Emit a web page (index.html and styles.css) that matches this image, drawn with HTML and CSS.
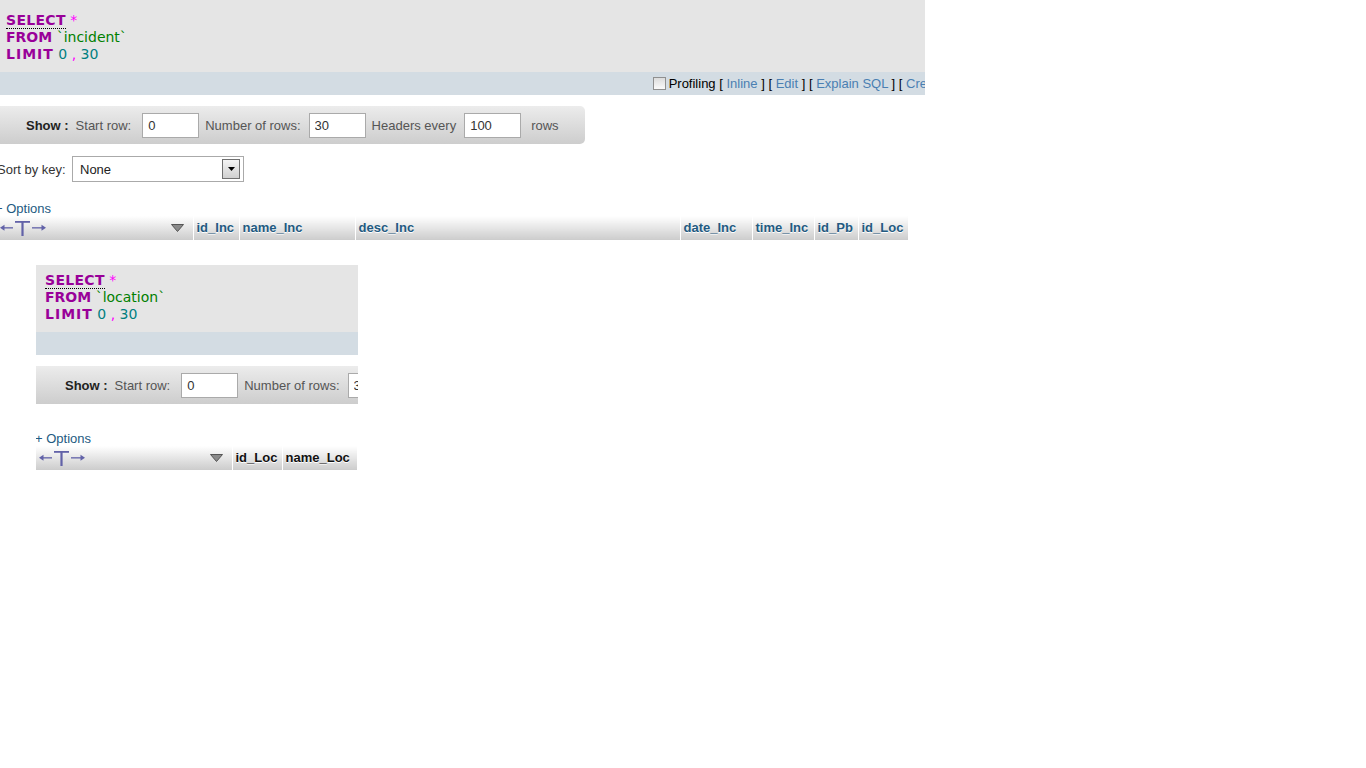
FILE: index.html
```html
<!DOCTYPE html>
<html>
<head>
<meta charset="utf-8">
<title>phpMyAdmin</title>
<link rel="stylesheet" href="styles.css">
</head>
<body>
<div class="result r1">
  <div class="sqlbox">
    <div class="line"><span class="kw doc">SELECT</span> <span class="punct">*</span></div>
    <div class="line"><span class="kw">FROM</span> <span class="ident">`incident`</span></div>
    <div class="line"><span class="kw lim">LIMIT</span> <span class="num">0</span> <span class="punct">,</span> <span class="num">30</span></div>
  </div>
  <div class="tools"><span class="check"></span> <span class="plain">Profiling</span> <span class="br">[</span> <a class="tl">Inline</a> <span class="br">]</span> <span class="br">[</span> <a class="tl">Edit</a> <span class="br">]</span> <span class="br">[</span> <a class="tl">Explain SQL</a> <span class="br">]</span> <span class="br">[</span> <a class="tl">Create PHP Code</a> <span class="br">]</span> <span class="br">[</span> <a class="tl">Refresh</a> <span class="br">]</span></div>
  <div class="showbar">
    <span class="show">Show :</span>
    <span class="lbl l-start">Start row:</span>
    <input class="field" type="text" value="0">
    <span class="lbl l-num">Number of rows:</span>
    <input class="field" type="text" value="30">
    <span class="lbl l-head">Headers every</span>
    <input class="field" type="text" value="100">
    <span class="lbl l-rows">rows</span>
  </div>
  <div class="sortrow">
    <span class="sortlbl">Sort by key:</span>
    <div class="select"><span>None</span><span class="selbtn"><svg width="7" height="4" viewBox="0 0 7 4"><polygon points="0,0 7,0 3.5,4" fill="#000"/></svg></span></div>
  </div>
  <div class="options o1"><a>+ Options</a></div>
  <table class="hdr t1">
    <colgroup><col style="width:196px"><col style="width:46px"><col style="width:116px"><col style="width:325px"><col style="width:72px"><col style="width:62px"><col style="width:44px"><col style="width:50px"></colgroup>
    <tr>
      <th class="first"><div class="firstin"><svg class="lr" width="48" height="18" viewBox="0 0 48 18"><g fill="#6262a8" stroke="none"><rect x="2" y="8.2" width="11" height="1.3"/><polygon points="0,8.8 4.5,5.8 4.5,11.8"/><rect x="15" y="2" width="15" height="1.8"/><rect x="21.4" y="2" width="2.2" height="15"/><rect x="32" y="8.2" width="11" height="1.3"/><polygon points="46,8.8 41.5,5.8 41.5,11.8"/></g></svg><svg class="tri" width="13" height="8" viewBox="0 0 13 8"><polygon points="0.5,0.5 12.5,0.5 6.5,7.5" fill="#8a8a8a" stroke="#555" stroke-width="1"/></svg></div></th>
      <th>id_Inc</th><th>name_Inc</th><th>desc_Inc</th><th>date_Inc</th><th>time_Inc</th><th>id_Pb</th><th>id_Loc</th>
    </tr>
  </table>
</div>

<div class="result r2">
  <div class="sqlbox">
    <div class="line"><span class="kw doc">SELECT</span> <span class="punct">*</span></div>
    <div class="line"><span class="kw">FROM</span> <span class="ident">`location`</span></div>
    <div class="line"><span class="kw lim">LIMIT</span> <span class="num">0</span> <span class="punct">,</span> <span class="num">30</span></div>
  </div>
  <div class="tools empty"></div>
  <div class="showbar">
    <span class="show">Show :</span>
    <span class="lbl l-start">Start row:</span>
    <input class="field" type="text" value="0">
    <span class="lbl l-num">Number of rows:</span>
    <input class="field" type="text" value="30">
    <span class="lbl l-head">Headers every</span>
    <input class="field" type="text" value="100">
    <span class="lbl l-rows">rows</span>
  </div>
  <div class="options o2"><a>+ Options</a></div>
  <table class="hdr t2">
    <colgroup><col style="width:196px"><col style="width:50px"><col style="width:75px"><col style="width:100px"></colgroup>
    <tr>
      <th class="first"><div class="firstin"><svg class="lr" width="48" height="18" viewBox="0 0 48 18"><g fill="#6262a8" stroke="none"><rect x="2" y="8.2" width="11" height="1.3"/><polygon points="0,8.8 4.5,5.8 4.5,11.8"/><rect x="15" y="2" width="15" height="1.8"/><rect x="21.4" y="2" width="2.2" height="15"/><rect x="32" y="8.2" width="11" height="1.3"/><polygon points="46,8.8 41.5,5.8 41.5,11.8"/></g></svg><svg class="tri" width="13" height="8" viewBox="0 0 13 8"><polygon points="0.5,0.5 12.5,0.5 6.5,7.5" fill="#8a8a8a" stroke="#555" stroke-width="1"/></svg></div></th>
      <th>id_Loc</th><th>name_Loc</th><th>comment</th>
    </tr>
  </table>
</div>
</body>
</html>
```

FILE: styles.css
```css
html, body {
  margin: 0;
  padding: 0;
  background: #ffffff;
}
body {
  font-family: "Liberation Sans", Arial, sans-serif;
  font-size: 13px;
  color: #000;
}
.result {
  overflow: hidden;
}
.r1 {
  margin-left: -3px;
  width: 928px;
}
.r2 {
  margin-left: 36px;
  width: 322px;
  margin-top: 25px;
}
.sqlbox {
  background: #e5e5e5;
  padding: 7px 9px 9px;
  font-family: "DejaVu Sans", Verdana, sans-serif;
  font-size: 14px;
  line-height: 17px;
}
.r1 .sqlbox {
  padding-top: 12px;
}
.line {
  white-space: nowrap;
}
.kw {
  color: #990099;
  font-weight: bold;
}
.kw.doc {
  letter-spacing: 0.3px;
}
.kw.lim {
  letter-spacing: 1px;
}
.doc {
  border-bottom: 1px dotted #000;
}
.punct {
  color: #ff00ff;
}
.ident {
  color: #008000;
}
.num {
  color: #008080;
}
.tools {
  background: #d3dce3;
  height: 22px;
  padding-top: 1px;
  line-height: 22px;
  padding-left: 656px;
  white-space: nowrap;
}
.tools.empty {
  padding-left: 0;
}
.tools .br {
  color: #000;
}
.tools .tl {
  color: #4a7fb2;
}
.check {
  display: inline-block;
  width: 11px;
  height: 11px;
  border: 1px solid #8f8f8f;
  background: linear-gradient(#dcdcdc, #fafafa);
  vertical-align: -2px;
  margin-right: -1px;
}
.showbar {
  margin-top: 11px;
  width: 588px;
  height: 38px;
  box-sizing: border-box;
  display: flex;
  align-items: center;
  padding-left: 29px;
  background: linear-gradient(#ececec, #cdcdcd);
  border-radius: 0 5px 5px 0;
  white-space: nowrap;
}
.show {
  font-weight: bold;
  color: #222;
}
.lbl {
  color: #555;
}
.l-start { margin-left: 7px; margin-right: 11px; }
.l-num { margin-left: 6px; margin-right: 8px; }
.l-head { margin-left: 6px; margin-right: 8px; }
.l-rows { margin-left: 10px; }
.field {
  box-sizing: border-box;
  width: 57px;
  height: 25px;
  border: 1px solid #aaa;
  padding: 0 5px;
  margin: 0;
  font-family: "Liberation Sans", Arial, sans-serif;
  font-size: 13px;
  color: #333;
  background: #fff;
  flex-shrink: 0;
}
.sortrow {
  margin-top: 12px;
  display: flex;
  align-items: center;
  height: 26px;
}
.sortlbl {
  color: #333;
  width: 75px;
}
.select {
  box-sizing: border-box;
  width: 172px;
  height: 26px;
  border: 1px solid #aaa;
  background: #fff;
  display: flex;
  align-items: center;
  justify-content: space-between;
  padding-left: 7px;
  padding-right: 3px;
  color: #222;
}
.selbtn {
  box-sizing: border-box;
  width: 18px;
  height: 20px;
  border: 1px solid #707070;
  background: linear-gradient(#f4f4f4, #d0d0d0);
  display: flex;
  align-items: center;
  justify-content: center;
}
.options {
  margin-top: 19px;
  margin-left: -1px;
  line-height: 15px;
  height: 15px;
}
.o1 {
  margin-left: -2px;
}
.options a {
  color: #235a81;
}
.o2 {
  margin-top: 27px;
}
.hdr {
  border-collapse: collapse;
  table-layout: fixed;
}
.t1 { width: 911px; }
.t2 { width: 421px; }
.hdr th {
  height: 24px;
  padding: 0 0 1px 3px;
  box-sizing: border-box;
  text-align: left;
  font-weight: bold;
  font-size: 13px;
  color: #235a81;
  text-shadow: 0 1px 0 #fff;
  background: linear-gradient(#ffffff, #cccccc);
  border-left: 1px solid #fff;
  white-space: nowrap;
  overflow: hidden;
}
.t2 th {
  color: #111;
}
.hdr th.first {
  border-left: none;
  padding: 0;
}
.firstin {
  display: flex;
  align-items: center;
  height: 24px;
}
.lr {
  margin-left: 3px;
  display: block;
}
.tri {
  margin-left: 123px;
  display: block;
}
```
